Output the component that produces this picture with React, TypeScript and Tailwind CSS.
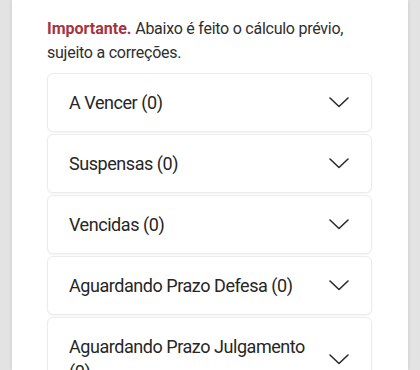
import React from "react";

const items = [
  "A Vencer (0)",
  "Suspensas (0)",
  "Vencidas (0)",
  "Aguardando Prazo Defesa (0)",
  "Aguardando Prazo Julgamento (0)",
];

function Chevron() {
  return (
    <svg width="20" height="11" viewBox="0 0 20 11" fill="none" className="shrink-0">
      <path d="M1 1 L10 9.5 L19 1" stroke="#2b2b2b" strokeWidth="1.6" strokeLinecap="round" strokeLinejoin="round" />
    </svg>
  );
}

export default function App() {
  return (
    <div
      className="w-[420px] h-[370px] overflow-hidden bg-[#e3e3e3] px-[12px]"
      style={{ fontFamily: "Roboto, 'Noto Sans', sans-serif" }}
    >
      <div className="h-full bg-white shadow-[0_0_4px_rgba(0,0,0,0.12)] pl-[35px] pr-[36px] pt-[17px]">
        <p className="text-[16px] leading-[24px] tracking-[-0.25px] text-[#2e2e2e]">
          <span className="text-[#a5343f] font-bold tracking-[0px]">Importante.</span> Abaixo é feito o cálculo prévio,
          sujeito a correções.
        </p>
        <div className="mt-[8px] flex flex-col gap-[2px]">
          {items.map((t) => (
            <div
              key={t}
              className="flex items-center justify-between rounded-[6px] border border-[#ececec] bg-white shadow-[0_1px_2px_rgba(0,0,0,0.05)] pl-[21px] pr-[22px] py-[16px]"
            >
              <span className="text-[18px] leading-[25px] tracking-[-0.45px] text-[#262626] pr-[10px]">{t}</span>
              <Chevron />
            </div>
          ))}
        </div>
      </div>
    </div>
  );
}
